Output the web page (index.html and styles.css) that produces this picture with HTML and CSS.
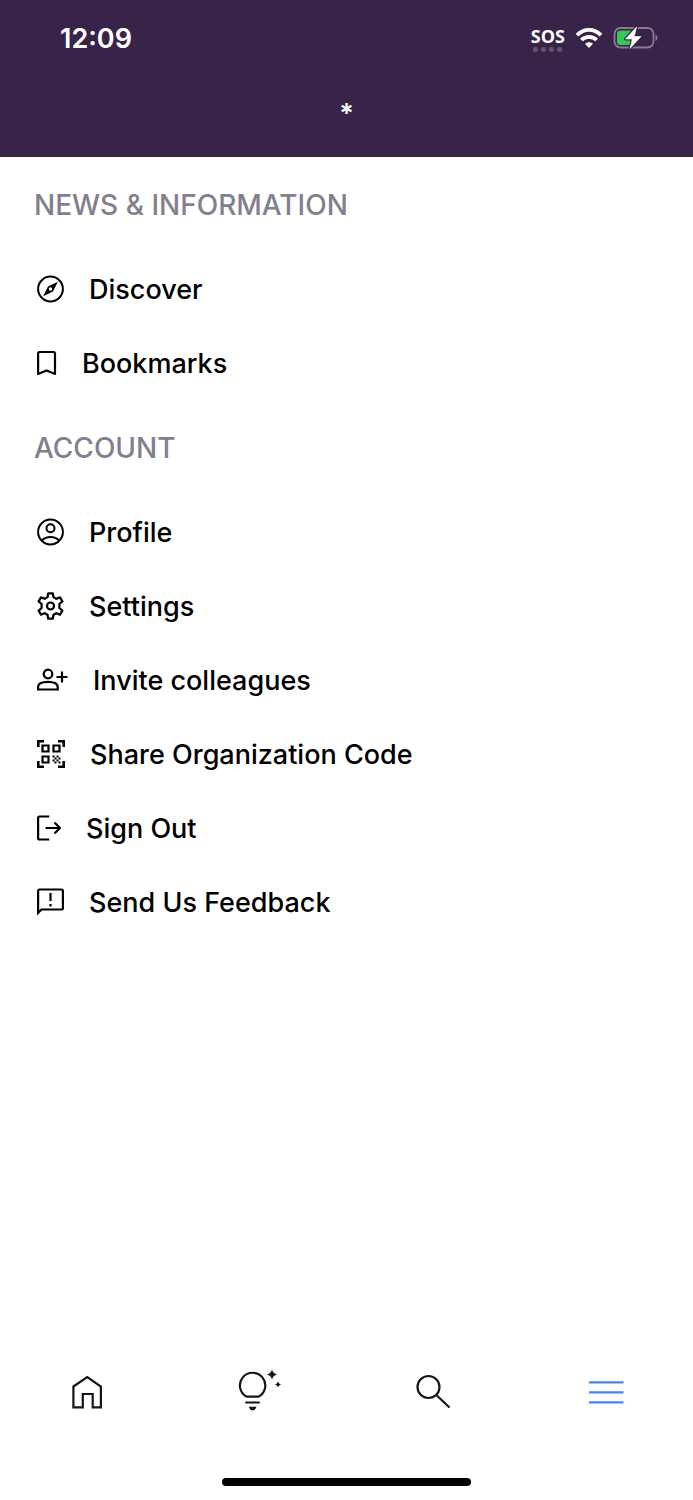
FILE: index.html
```html
<!DOCTYPE html>
<html lang="en">
<head>
    <meta charset="UTF-8">
    <meta name="viewport" content="width=device-width, initial-scale=1.0">
    <title>Menu</title>
    <link rel="stylesheet" href="styles.css">
</head>
<body>
    <header class="header">
        <div class="status-bar">
            <span class="time">12:09</span>
            <div class="status-icons">
                <div class="signal">
                    <span class="sos">SOS</span>
                    <span class="dots"><i></i><i></i><i></i><i></i></span>
                </div>
                <svg width="28" height="22" viewBox="0 0 28 22" fill="none" stroke="#fff">
                    <path d="M2 8.2C9 1.1 19 1.1 26 8.2" stroke-width="3.8"/>
                    <path d="M6.4 13C10.8 8.7 17.2 8.7 21.6 13" stroke-width="3.8"/>
                    <path d="M14 21l-4-4.2c2.3-2.2 5.700-2.2 8 0z" fill="#fff" stroke="none"/>
                </svg>
                <svg width="46" height="24" viewBox="0 0 46 24">
                    <rect x="1.500" y="2" width="39" height="19.500" rx="6" fill="none" stroke="#877b91" stroke-width="1.800"/>
                    <path d="M42.500 8.500c2.600 1 2.600 5.500 0 6.500z" fill="#877b91"/>
                    <path d="M7.500 4.500H20V19H7.500a3.500 3.500 0 0 1-3.500-3.500V8a3.500 3.500 0 0 1 3.500-3.500z" fill="#34c759"/>
                    <path d="M23.500 1L12.500 13h6.800L17 22.500 28 10.500h-6.800z" fill="#fff" stroke="#372448" stroke-width="3" stroke-linejoin="round"/>
                    <path d="M23.500 1L12.500 13h6.800L17 22.500 28 10.500h-6.800z" fill="#fff" stroke="#fff" stroke-width=".6"/>
                </svg>
            </div>
        </div>
        <h1 class="title">*</h1>
    </header>

    <main class="menu">
        <h2>NEWS &amp; INFORMATION</h2>
        <ul>
            <li><a href="#discover">
                <svg width="27" height="28" viewBox="0 0 27 28">
                    <circle cx="13.500" cy="14" r="12.400" fill="none" stroke="#000" stroke-width="2"/>
                    <path fill-rule="evenodd" d="M20.800 6.700l-4.800 9.800-9.800 4.800 4.800-9.800zM13.500 12.300a1.700 1.700 0 1 0 0 3.400 1.700 1.700 0 0 0 0-3.400z"/>
                </svg>
                <span>Discover</span></a></li>
            <li><a href="#bookmarks">
                <svg width="20" height="28" viewBox="0 0 20 28" fill="none" stroke="#000" stroke-width="2.200" stroke-linejoin="round">
                    <path d="M1.100 25V4.500q0-1.500 1.500-1.500h13.900q1.500 0 1.500 1.500V25l-8.400-3.600z"/>
                </svg>
                <span>Bookmarks</span></a></li>
        </ul>

        <h2>ACCOUNT</h2>
        <ul>
            <li><a href="#profile">
                <svg width="27" height="28" viewBox="0 0 27 28" fill="none" stroke="#000" stroke-width="2">
                    <circle cx="13.500" cy="14" r="12.400"/>
                    <circle cx="13.500" cy="10.300" r="4"/>
                    <path d="M5 22.500c4.500-4.600 12.500-4.600 17 0"/>
                </svg>
                <span>Profile</span></a></li>
            <li><a href="#settings">
                <svg width="27" height="28" viewBox="0 0 27 28" fill="none" stroke="#000" stroke-width="2.200" stroke-linejoin="round">
                    <path d="M11.200 1.300h4.600l.7 3.900q1.500.5 2.800 1.600l3.700-1.400 2.400 4-3.100 2.600q.4 2 0 4l3.100 2.600-2.400 4-3.700-1.400q-1.300 1.100-2.800 1.600l-.7 3.900h-4.600l-.7-3.900q-1.500-.5-2.800-1.600L4 22.600l-2.400-4L4.700 16q-.4-2 0-4L1.600 9.400 4 5.400l3.700 1.400q1.300-1.100 2.800-1.600z"/>
                    <circle cx="13.500" cy="14" r="3.500"/>
                </svg>
                <span>Settings</span></a></li>
            <li><a href="#invite">
                <svg width="31" height="28" viewBox="0 0 31 28" fill="none" stroke="#000" stroke-width="2.200">
                    <circle cx="11" cy="8" r="4.300"/>
                    <path d="M1.100 23.500v-2.600c0-3.300 4.400-5 9.800-5s9.800 1.700 9.800 5v2.600z"/>
                    <path d="M25 5.500v11M19.500 11h11"/>
                </svg>
                <span>Invite colleagues</span></a></li>
            <li><a href="#share-code">
                <svg width="28" height="28" viewBox="0 0 28 28" fill="none" stroke="#000" stroke-width="2.600">
                    <path d="M1.300 7V1.300H7M21 1.300h5.700V7M1.300 21v5.700H7M21 26.700h5.700V21"/>
                    <path d="M5.500 5.500h6v6h-6zM16.500 5.500h6v6h-6zM5.500 16.500h6v6h-6z" stroke-width="2.200"/>
                    <path d="M15.500 16.500h2M19.500 16.500h2M17.500 18.500h2M21.500 18.500h2M15.500 20.500h2M19.500 20.500h2M17.500 22.500h2M21.500 22.500h2" stroke-width="2"/>
                </svg>
                <span>Share Organization Code</span></a></li>
            <li><a href="#sign-out">
                <svg width="24" height="28" viewBox="0 0 24 28" fill="none" stroke="#000" stroke-width="2.200">
                    <path d="M12.300 2.500H2.600Q1.100 2.500 1.100 4v20q0 1.500 1.500 1.500h9.700"/>
                    <path d="M8.500 14H23M17.500 8.500L23 14l-5.500 5.500"/>
                </svg>
                <span>Sign Out</span></a></li>
            <li><a href="#feedback">
                <svg width="27" height="28" viewBox="0 0 27 28" fill="none" stroke="#000" stroke-width="2.200">
                    <path d="M1.100 24.800V3q0-1.500 1.500-1.500h21.800q1.500 0 1.500 1.500v17q0 1.500-1.500 1.500H4.500z"/>
                    <path d="M13.500 5v8M13.500 16v2.500"/>
                </svg>
                <span>Send Us Feedback</span></a></li>
        </ul>
    </main>

    <nav class="tab-bar">
        <a href="#home" aria-label="Home">
            <svg width="48" height="48" viewBox="0 0 48 48" fill="none" stroke="#16131c" stroke-width="2.200">
                <path d="M10.400 18.500L24.300 9l13.600 9.500v20.900h-8.200V26h-9.900v13.400h-9.400z"/>
            </svg>
        </a>
        <a href="#ideas" aria-label="Ideas">
            <svg width="48" height="48" viewBox="0 0 48 48" fill="none" stroke="#16131c" stroke-width="2.200">
                <path d="M10.500 28.600a12.700 12.700 0 1 1 12.200 0zM9.300 34.500h14.500"/>
                <path d="M12.800 38.800h7.600q-1 3.600-3.800 3.600t-3.800-3.600z" fill="#16131c" stroke="none"/>
                <path d="M36 1.500q1 4 5 5-4 1-5 5-1-4-5-5 4-1 5-5zM42 13.500q.6 2.400 3 3-2.400.6-3 3-.6-2.400-3-3 2.400-.6 3-3z" fill="#16131c" stroke="none"/>
            </svg>
        </a>
        <a href="#search" aria-label="Search">
            <svg width="48" height="48" viewBox="0 0 48 48" fill="none" stroke="#16131c" stroke-width="2.200">
                <circle cx="19.500" cy="19" r="11"/>
                <path d="M27.300 27L40.500 39.500"/>
            </svg>
        </a>
        <a href="#menu" aria-label="Menu">
            <svg width="48" height="48" viewBox="0 0 48 48" fill="none" stroke="#4285f4" stroke-width="2.200">
                <path d="M7 14.300h34.500M7 24.300h34.500M7 34.300h34.500"/>
            </svg>
        </a>
    </nav>
    <div class="home-indicator"></div>
</body>
</html>
```

FILE: styles.css
```css
* {
    box-sizing: border-box;
}
body {
    margin: 0;
    min-height: 100vh;
    display: flex;
    flex-direction: column;
    background-color: #fff;
    color: #000;
    font-family: Inter, "Liberation Sans", sans-serif;
}
.header {
    background-color: #372448;
    color: #fff;
    height: 157px;
}
.status-bar {
    display: flex;
    justify-content: space-between;
    align-items: center;
    height: 76px;
    padding: 0 34px 0 60px;
}
.time {
    font-size: 27px;
    font-weight: 600;
}
.status-icons {
    display: flex;
    align-items: center;
    gap: 10px;
}
.signal {
    display: flex;
    flex-direction: column;
    align-items: center;
}
.sos {
    font-family: "Open Sans", "Liberation Sans", sans-serif;
    font-size: 18px;
    font-weight: bold;
    line-height: 22px;
}
.dots {
    display: flex;
    gap: 3px;
}
.dots i {
    width: 5px;
    height: 5px;
    border-radius: 2px;
    background-color: #65556f;
}
.title {
    margin: 0;
    font-size: 27px;
    font-weight: 600;
    line-height: 76px;
    text-align: center;
}
.menu {
    flex: 1;
}
.menu h2 {
    margin: 0;
    padding: 2px 34px 0;
    font-size: 28px;
    font-weight: 500;
    line-height: 93px;
    color: #82808c;
}
.menu ul {
    margin: 0;
    padding: 0;
    list-style: none;
}
.menu a {
    display: flex;
    align-items: center;
    gap: 25px;
    height: 74px;
    padding: 0 37px;
    font-size: 27px;
    font-weight: 500;
    color: #000;
    text-decoration: none;
}
.menu svg {
    flex-shrink: 0;
}
.tab-bar {
    display: grid;
    grid-template-columns: repeat(4, 1fr);
}
.tab-bar a {
    display: flex;
    justify-content: center;
    padding: 24px 0;
}
.home-indicator {
    width: 36%;
    height: 8px;
    margin: 38px auto 14px;
    border-radius: 4px;
    background-color: #000;
}
```
